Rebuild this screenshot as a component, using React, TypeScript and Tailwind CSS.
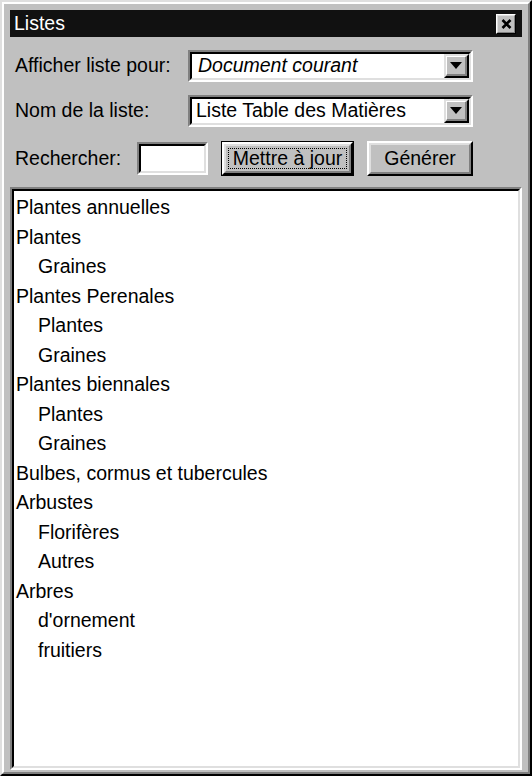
import React from "react";

const ITEMS: { label: string; indent?: boolean }[] = [
  { label: "Plantes annuelles" },
  { label: "Plantes" },
  { label: "Graines", indent: true },
  { label: "Plantes Perenales" },
  { label: "Plantes", indent: true },
  { label: "Graines", indent: true },
  { label: "Plantes biennales" },
  { label: "Plantes", indent: true },
  { label: "Graines", indent: true },
  { label: "Bulbes, cormus et tubercules" },
  { label: "Arbustes" },
  { label: "Florifères", indent: true },
  { label: "Autres", indent: true },
  { label: "Arbres" },
  { label: "d'ornement", indent: true },
  { label: "fruitiers", indent: true },
];

function Sunken({ className = "", children }: { className?: string; children?: React.ReactNode }) {
  return (
    <div className={`border-2 border-t-[#808080] border-l-[#808080] border-b-white border-r-white ${className}`}>
      <div className="h-full border-2 border-t-black border-l-black border-b-[#dfdfdf] border-r-[#dfdfdf] bg-white flex">
        {children}
      </div>
    </div>
  );
}

function Raised({ className = "", inner = "", children }: { className?: string; inner?: string; children?: React.ReactNode }) {
  return (
    <div className={`border-2 border-t-white border-l-white border-b-black border-r-black bg-[#c0c0c0] ${className}`}>
      <div className={`h-full border-2 border-t-[#dfdfdf] border-l-[#dfdfdf] border-b-[#808080] border-r-[#808080] flex items-center justify-center ${inner}`}>
        {children}
      </div>
    </div>
  );
}

function DropArrow() {
  return (
    <div className="w-[25px] h-full border-2 border-t-[#dfdfdf] border-l-[#dfdfdf] border-b-black border-r-black bg-[#c0c0c0]">
      <div className="h-full border-t border-l border-t-white border-l-white border-b-2 border-r-2 border-b-[#808080] border-r-[#808080] flex items-center justify-center">
        <svg width="12" height="7" viewBox="0 0 12 7">
          <polygon points="0,0 12,0 6,7" fill="#000" />
        </svg>
      </div>
    </div>
  );
}

export default function App() {
  return (
    <div className="w-[532px] h-[776px] bg-[#c0c0c0] border-2 border-t-[#dfdfdf] border-l-[#dfdfdf] border-b-black border-r-black font-['Liberation_Sans',Arial,sans-serif] text-[19.5px] text-black select-none">
      <div className="h-full border-2 border-t-white border-l-white border-b-[#808080] border-r-[#808080] pt-[6px] px-[6px] pb-[2px] flex flex-col">
        {/* title bar */}
        <div className="h-[27px] shrink-0 bg-[#111111] flex items-center justify-between pl-[4px] pr-[6px]">
          <span className="text-white leading-none">Listes</span>
          <div className="w-[20px] h-[20px] border border-t-white border-l-white border-b-black border-r-black bg-[#c0c0c0]">
            <div className="h-full border border-t-[#dfdfdf] border-l-[#dfdfdf] border-b-[#808080] border-r-[#808080] flex items-center justify-center">
              <svg width="11" height="10" viewBox="0 0 11 10">
                <path d="M1.5 1 L9.5 9 M9.5 1 L1.5 9" stroke="#000" strokeWidth="2.6" />
              </svg>
            </div>
          </div>
        </div>

        {/* afficher */}
        <div className="mt-[13px] h-[32px] shrink-0 flex items-center">
          <span className="w-[178px] pl-[5px]">Afficher liste pour:</span>
          <Sunken className="w-[285px] h-full">
            <span className="flex-1 flex items-center pl-[6px] italic">Document courant</span>
            <DropArrow />
          </Sunken>
        </div>

        {/* nom */}
        <div className="mt-[13px] h-[32px] shrink-0 flex items-center">
          <span className="w-[178px] pl-[5px]">Nom de la liste:</span>
          <Sunken className="w-[285px] h-full">
            <span className="flex-1 flex items-center pl-[4px]">Liste Table des Matières</span>
            <DropArrow />
          </Sunken>
        </div>

        {/* rechercher */}
        <div className="mt-[14px] h-[35px] shrink-0 flex items-center">
          <span className="w-[127px] pl-[5px]">Rechercher:</span>
          <Sunken className="w-[71px] h-[33px]" />
          <div className="ml-[13px] w-[133px] h-full border border-black">
            <Raised className="h-full" inner="p-[2px]">
              <span className="w-full h-full flex items-center justify-center border border-dotted border-black">Mettre à jour</span>
            </Raised>
          </div>
          <Raised className="ml-[13px] w-[106px] h-full">
            <span>Générer</span>
          </Raised>
        </div>

        {/* list */}
        <Sunken className="mt-[11px] flex-1 min-h-0">
          <div className="flex-1 flex flex-col pt-[2px]">
            {ITEMS.map((it, i) => (
              <div key={i} className={`h-[29.5px] flex items-center whitespace-nowrap ${it.indent ? "pl-[24px]" : "pl-[2px]"}`}>
                {it.label}
              </div>
            ))}
          </div>
        </Sunken>
      </div>
    </div>
  );
}
